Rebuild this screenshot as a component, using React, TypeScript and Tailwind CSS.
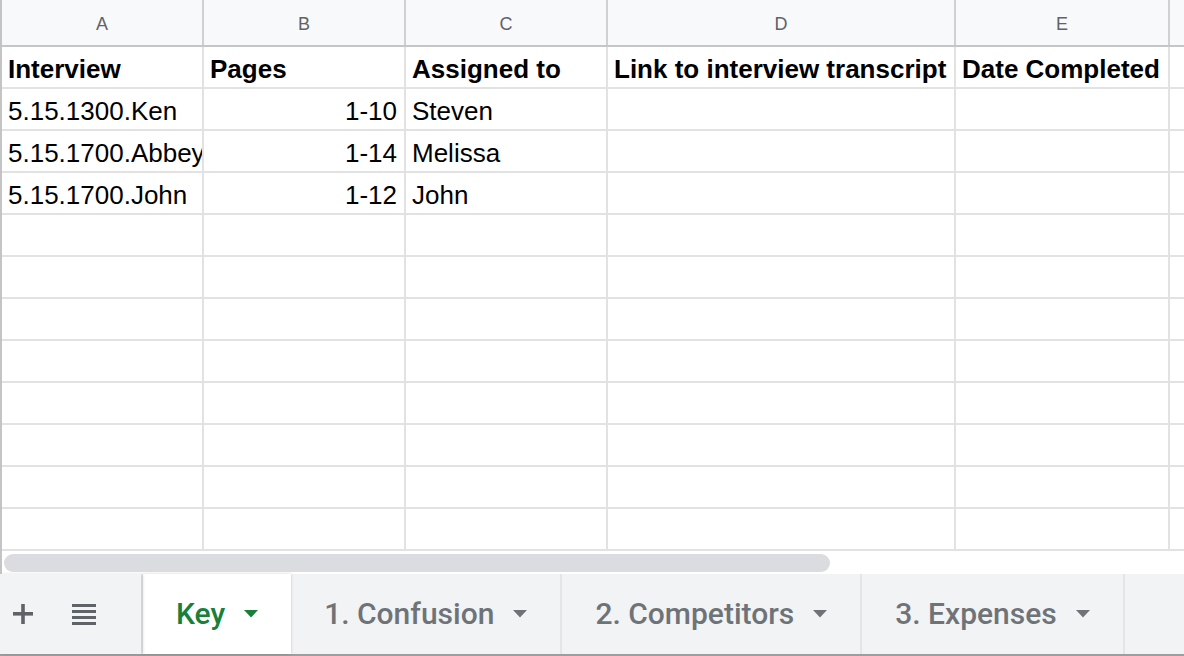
import React from 'react';

const cols = [
  { letter: 'A', w: 'w-[202px]' },
  { letter: 'B', w: 'w-[202px]' },
  { letter: 'C', w: 'w-[202px]' },
  { letter: 'D', w: 'w-[348px]' },
  { letter: 'E', w: 'w-[214px]' },
  { letter: '', w: 'flex-1' },
];

type Cell = { t: string; bold?: boolean; right?: boolean };

const data: Cell[][] = [
  [
    { t: 'Interview', bold: true },
    { t: 'Pages', bold: true },
    { t: 'Assigned to', bold: true },
    { t: 'Link to interview transcript', bold: true },
    { t: 'Date Completed', bold: true },
  ],
  [{ t: '5.15.1300.Ken' }, { t: '1-10', right: true }, { t: 'Steven' }],
  [{ t: '5.15.1700.Abbey' }, { t: '1-14', right: true }, { t: 'Melissa' }],
  [{ t: '5.15.1700.John' }, { t: '1-12', right: true }, { t: 'John' }],
];

const rows: Cell[][] = [...data];
while (rows.length < 12) rows.push([]);

function Caret({ color }: { color: string }) {
  return (
    <svg width="14" height="8" viewBox="0 0 14 8" className="shrink-0">
      <path d="M0 0 L14 0 L7 7.5 Z" fill={color} />
    </svg>
  );
}

function Tab({ label, active }: { label: string; active?: boolean }) {
  return (
    <div
      className={
        'flex h-full items-center gap-[19px] pl-[33px] pr-[33px] ' +
        (active
          ? 'bg-white shadow-[0_0_3px_rgba(0,0,0,0.18)] text-[#188038]'
          : 'text-[#6f7378] border-r-2 border-[#e3e5e7]')
      }
    >
      <span
        className="text-[30px] font-medium leading-none"
        style={{ fontFamily: 'Roboto, "Noto Sans", sans-serif' }}
      >
        {label}
      </span>
      <Caret color={active ? '#188038' : '#6f7378'} />
    </div>
  );
}

export default function App() {
  return (
    <div
      className="w-[1184px] h-[656px] overflow-hidden bg-white flex flex-col"
      style={{ fontFamily: '"Liberation Sans", Arial, sans-serif' }}
    >
      {/* grid */}
      <div className="flex flex-col border-l-2 border-[#c4c4c4]">
        {/* column header */}
        <div className="flex h-[47px] bg-[#f8f9fa] border-b-2 border-[#c4c7c5]">
          {cols.map((c, i) => (
            <div
              key={i}
              className={
                c.w +
                ' shrink-0 h-full flex items-center justify-center pt-[3px] text-[18px] text-[#5f6368] ' +
                (i < 5 ? 'border-r-2 border-[#d0d0d0]' : '')
              }
            >
              {c.letter}
            </div>
          ))}
        </div>
        {rows.map((r, ri) => (
          <div key={ri} className="flex h-[42px] border-b-2 border-[#e2e2e2]">
            {cols.map((c, ci) => {
              const cell = r[ci];
              return (
                <div
                  key={ci}
                  className={
                    c.w +
                    ' shrink-0 h-full overflow-hidden whitespace-nowrap flex items-center pt-[4px] text-[26px] text-black ' +
                    (ci < 5 ? 'border-r-2 border-[#e2e2e2] ' : '') +
                    (cell?.right ? 'justify-end pr-[7px] ' : 'pl-[6px] ') +
                    (cell?.bold ? 'font-bold' : '')
                  }
                >
                  {cell?.t ?? ''}
                </div>
              );
            })}
          </div>
        ))}
      </div>
      {/* scrollbar */}
      <div className="h-[23px] bg-white pl-[2px] pt-[3px] border-l-2 border-[#c4c4c4]">
        <div className="w-[826px] h-[18px] rounded-full bg-[#dadce0]" />
      </div>
      {/* tab bar */}
      <div className="flex h-[82px] bg-[#f1f3f4] border-b-2 border-[#9e9e9e]">
        <div className="w-[141px] h-full flex items-center shrink-0 shadow-[2px_0_3px_rgba(0,0,0,0.12)] z-10 bg-[#f1f3f4]">
          <svg width="20" height="20" viewBox="0 0 20 20" className="ml-[13px]">
            <rect x="0" y="8" width="20" height="3.6" fill="#5f6368" />
            <rect x="8.2" y="0" width="3.6" height="20" fill="#5f6368" />
          </svg>
          <svg width="24" height="21" viewBox="0 0 24 21" className="ml-[39px]">
            <rect x="0" y="0" width="24" height="3" fill="#5f6368" />
            <rect x="0" y="6" width="24" height="3" fill="#5f6368" />
            <rect x="0" y="12" width="24" height="3" fill="#5f6368" />
            <rect x="0" y="18" width="24" height="3" fill="#5f6368" />
          </svg>
        </div>
        <div className="flex h-full pl-[2px]">
          <Tab label="Key" active />
          <Tab label="1. Confusion" />
          <Tab label="2. Competitors" />
          <Tab label="3. Expenses" />
        </div>
      </div>
    </div>
  );
}
